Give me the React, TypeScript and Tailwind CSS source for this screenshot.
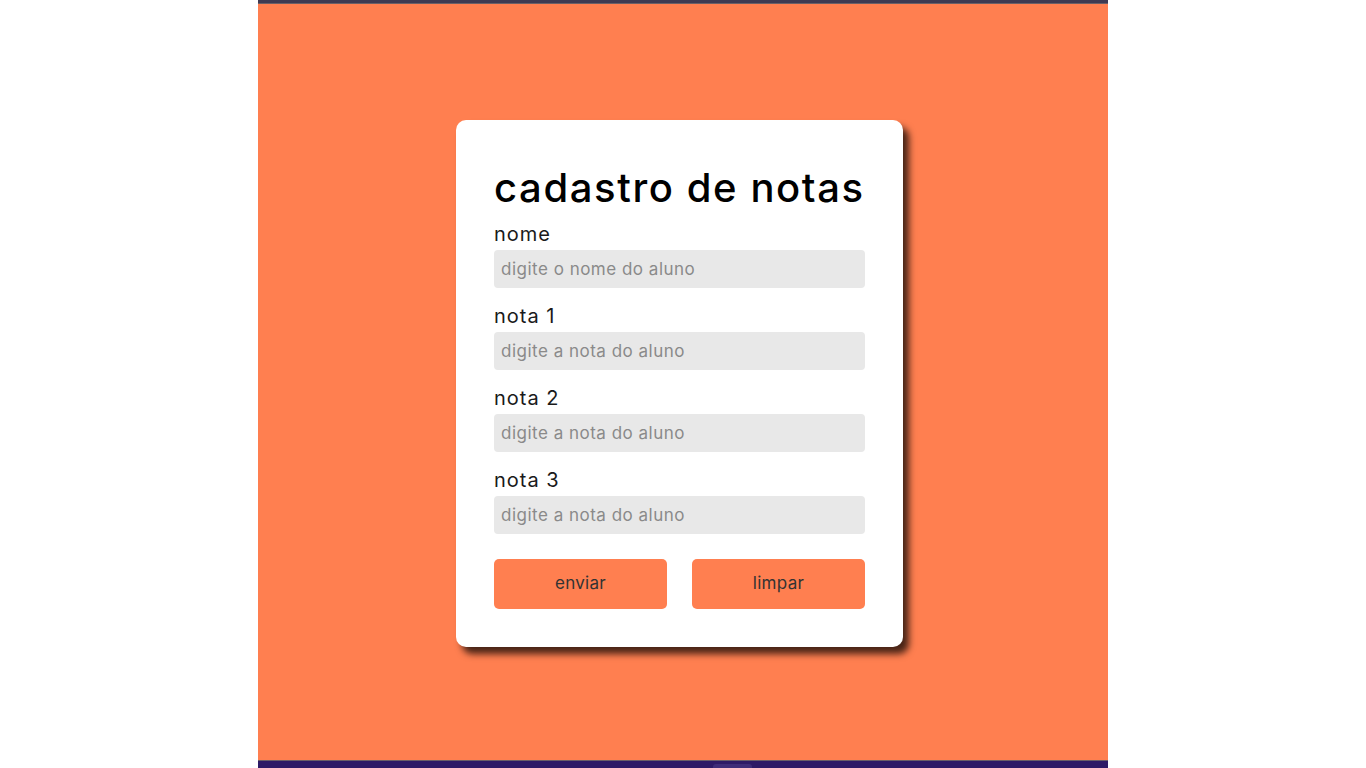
import { useState } from 'react';

// Campos do formulário de notas
const campos = [
    { id: 'nome', label: 'nome', placeholder: 'digite o nome do aluno' },
    { id: 'nota1', label: 'nota 1', placeholder: 'digite a nota do aluno' },
    { id: 'nota2', label: 'nota 2', placeholder: 'digite a nota do aluno' },
    { id: 'nota3', label: 'nota 3', placeholder: 'digite a nota do aluno' },
];

export default function App() {
    const [valores, setValores] = useState<Record<string, string>>({});

    const limpar = () => setValores({});

    return (
        <div className="w-full h-[768px] bg-white flex justify-center font-['Inter',sans-serif]">
            <div className="w-[850px] h-full flex flex-col mr-[1px]">
                <div className="h-[4px] bg-[#3e3a52] border-b border-[#6b5f66]" />

                <main className="flex-1 bg-[#ff7f50] flex items-center justify-center pr-[6px] pt-[3px]">
                    <form
                        onSubmit={(e) => e.preventDefault()}
                        className="w-[447px] h-[527px] bg-white rounded-[10px] shadow-[6px_7px_7px_rgba(0,0,0,0.72)] px-[38px] pt-[44px]"
                    >
                        <h1 className="text-[40px] leading-[48px] font-medium text-black tracking-[1.6px] mb-[10px]">
                            cadastro de notas
                        </h1>

                        <div className="flex flex-col gap-[16px]">
                            {campos.map((c) => (
                                <div key={c.id} className="flex flex-col">
                                    <label htmlFor={c.id} className="text-[20px] leading-[24px] tracking-[1px] text-[#1a1a1a] mb-[4px]">
                                        {c.label}
                                    </label>
                                    <input
                                        id={c.id}
                                        placeholder={c.placeholder}
                                        value={valores[c.id] ?? ''}
                                        onChange={(e) => setValores({ ...valores, [c.id]: e.target.value })}
                                        className="h-[38px] w-full rounded-[4px] bg-[#e8e8e8] px-[7px] text-[17px] tracking-[0.5px] text-[#333] placeholder:text-[#8a8a8a] outline-none"
                                    />
                                </div>
                            ))}
                        </div>

                        <div className="flex justify-between mt-[25px]">
                            <button
                                type="submit"
                                className="w-[173px] h-[50px] rounded-[5px] bg-[#ff7f50] text-[17px] tracking-[0.3px] text-[#333]"
                            >
                                enviar
                            </button>
                            <button
                                type="button"
                                onClick={limpar}
                                className="w-[173px] h-[50px] rounded-[5px] bg-[#ff7f50] text-[17px] tracking-[0.3px] text-[#333]"
                            >
                                limpar
                            </button>
                        </div>
                    </form>
                </main>

                <div className="h-[8px] bg-[#2e1a66] border-t border-[#6b5f66] flex justify-center items-end">
                    <div className="w-[39px] h-[4px] rounded-t-[3px] bg-[#3f2c78] ml-[100px]" />
                </div>
            </div>
        </div>
    );
}
